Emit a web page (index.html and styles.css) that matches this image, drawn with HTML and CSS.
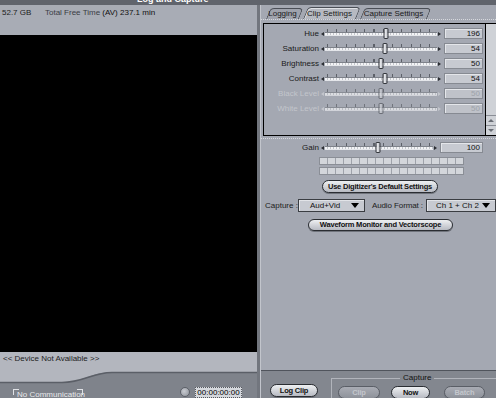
FILE: index.html
```html
<!DOCTYPE html>
<html lang="en">
<head>
    <meta charset="UTF-8">
    <meta name="viewport" content="width=device-width, initial-scale=1.0">
    <title>Log and Capture</title>
    <link rel="stylesheet" href="styles.css">
</head>
<body>
    <div class="window">
        <div class="titlebar"><span>Log and Capture</span></div>
        <div class="main">
            <div class="left">
                <div class="info">
                    <span class="disk">52.7 GB</span>
                    <span class="free">Total Free Time <b>(AV) 237.1 min</b></span>
                </div>
                <div class="video"></div>
                <div class="device">&lt;&lt; Device Not Available &gt;&gt;</div>
                <svg class="wave" viewBox="0 0 257 20" preserveAspectRatio="none">
                    <rect width="257" height="20" fill="#7f838b"/>
                    <path d="M0 0 H257 V6 H112 C92 6 84 16 62 16 H0 Z" fill="#b3b6be"/>
                    <path d="M0 16.5 H62 C84 16.5 92 6.5 112 6.5 H257" fill="none" stroke="#5b5f67" stroke-width="1.5"/>
                </svg>
                <div class="transport">
                    <div class="status">No Communication</div>
                    <div class="tc-icon"></div>
                    <div class="timecode">00:00:00:00</div>
                </div>
            </div>

            <div class="right">
                <div class="tabs">
                    <div class="tab tab-logging">Logging</div>
                    <div class="tab tab-clip active">Clip Settings</div>
                    <div class="tab tab-capture">Capture Settings</div>
                </div>

                <div class="image-box">
                    <div class="rows">
                        <div class="row">
                            <span class="label">Hue</span>
                            <span class="arrow l"></span>
                            <span class="track"><span class="thumb" style="left:54.4%"></span></span>
                            <span class="arrow r"></span>
                            <span class="value">196</span>
                        </div>
                        <div class="row">
                            <span class="label">Saturation</span>
                            <span class="arrow l"></span>
                            <span class="track"><span class="thumb" style="left:54%"></span></span>
                            <span class="arrow r"></span>
                            <span class="value">54</span>
                        </div>
                        <div class="row">
                            <span class="label">Brightness</span>
                            <span class="arrow l"></span>
                            <span class="track"><span class="thumb" style="left:50%"></span></span>
                            <span class="arrow r"></span>
                            <span class="value">50</span>
                        </div>
                        <div class="row">
                            <span class="label">Contrast</span>
                            <span class="arrow l"></span>
                            <span class="track"><span class="thumb" style="left:54%"></span></span>
                            <span class="arrow r"></span>
                            <span class="value">54</span>
                        </div>
                        <div class="row disabled">
                            <span class="label">Black Level</span>
                            <span class="arrow l"></span>
                            <span class="track"><span class="thumb" style="left:50%"></span></span>
                            <span class="arrow r"></span>
                            <span class="value">50</span>
                        </div>
                        <div class="row disabled">
                            <span class="label">White Level</span>
                            <span class="arrow l"></span>
                            <span class="track"><span class="thumb" style="left:50%"></span></span>
                            <span class="arrow r"></span>
                            <span class="value">50</span>
                        </div>
                    </div>
                    <div class="scrollbar">
                        <div class="sb-track"></div>
                        <div class="sb-btn up"></div>
                        <div class="sb-btn down"></div>
                    </div>
                </div>

                <div class="audio">
                    <div class="row gain">
                        <span class="label">Gain</span>
                        <span class="arrow l"></span>
                        <span class="track"><span class="thumb" style="left:49%"></span></span>
                        <span class="arrow r"></span>
                        <span class="value">100</span>
                    </div>
                    <div class="meter"></div>
                    <div class="meter"></div>
                    <button class="pill defaults">Use Digitizer's Default Settings</button>
                </div>

                <div class="capture-row">
                    <span class="cap-label">Capture :</span>
                    <div class="select sel-capture"><span>Aud+Vid</span><i class="caret"></i></div>
                    <span class="fmt-label">Audio Format :</span>
                    <div class="select sel-format"><span>Ch 1 + Ch 2</span><i class="caret"></i></div>
                </div>

                <button class="pill scopes">Waveform Monitor and Vectorscope</button>

                <div class="bottom">
                    <button class="pill log-clip">Log Clip</button>
                    <div class="group">
                        <span class="group-title">Capture</span>
                        <button class="pill off btn-clip">Clip</button>
                        <button class="pill btn-now">Now</button>
                        <button class="pill off btn-batch">Batch</button>
                    </div>
                </div>
            </div>
        </div>
    </div>
</body>
</html>
```

FILE: styles.css
```css
* {
    box-sizing: border-box;
}
body {
    margin: 0;
    font-family: "Liberation Sans", Arial, sans-serif;
    font-size: 8px;
    color: #1c1c1c;
    background: #a4a8b2;
    white-space: nowrap;
}
.window {
    width: 496px;
    height: 398px;
    overflow: hidden;
    display: flex;
    flex-direction: column;
}
.titlebar {
    height: 5px;
    overflow: hidden;
    background: #60646c;
    padding-left: 137px;
    color: #fff;
    font-weight: bold;
    font-size: 9px;
    line-height: 9px;
}
.titlebar span {
    display: block;
    margin-top: -5px;
}
.main {
    flex: 1;
    display: flex;
    min-height: 0;
}

/* left: viewer */
.left {
    width: 260px;
    display: flex;
    flex-direction: column;
    background: #a8acb5;
    border-right: 3px solid #72767e;
}
.info {
    height: 30px;
    display: flex;
    padding: 3px 2px 0;
    line-height: 9px;
}
.disk {
    width: 43px;
}
.free {
    color: #3a3d44;
}
.free b {
    font-weight: normal;
    color: #111;
}
.video {
    flex: 1;
    background: #000;
}
.device {
    height: 14px;
    line-height: 14px;
    padding-left: 3px;
    background: #b3b6be;
    color: #222;
}
.wave {
    display: block;
    width: 257px;
    height: 20px;
}
.transport {
    height: 12px;
    background: #7f838b;
    display: flex;
}
.status {
    position: relative;
    margin: 3px 0 0 13px;
    width: 70px;
    padding-left: 4px;
    line-height: 12px;
    color: #e8e9ec;
}
.status::before,
.status::after {
    content: "";
    position: absolute;
    top: 0;
    width: 5px;
    height: 5px;
    border-top: 1px solid #e0e2e6;
}
.status::before {
    left: 0;
    border-left: 1px solid #e0e2e6;
}
.status::after {
    right: 0;
    border-right: 1px solid #e0e2e6;
}
.tc-icon {
    margin: 1px 0 0 97px;
    width: 10px;
    height: 10px;
    border-radius: 50%;
    background: radial-gradient(circle at 40% 40%, #c8cbd1, #8c9098);
    border: 1px solid #5c6068;
}
.timecode {
    margin: 1px 0 0 5px;
    width: 47px;
    height: 11px;
    line-height: 10px;
    text-align: center;
    background: #d4d7dc;
    border: 1px dotted #55585e;
    color: #000;
}

/* right: settings */
.right {
    flex: 1;
    min-width: 0;
    display: flex;
    flex-direction: column;
    border-left: 1px solid #c2c5cc;
}
.tabs {
    height: 15px;
    padding: 3px 0 0 3px;
    display: flex;
    border-bottom: 1px dotted #d6d8dd;
}
.tab {
    position: relative;
    z-index: 0;
    height: 11px;
    line-height: 11px;
    text-align: center;
    color: #1a1a1a;
}
.tab::before {
    content: "";
    position: absolute;
    inset: 0;
    z-index: -1;
    background: #9fa3ad;
    border: 1px solid #4a4e56;
    border-bottom: none;
    border-radius: 4px 4px 0 0;
    transform: skewX(-22deg);
    transform-origin: bottom;
}
.tab-logging {
    width: 33px;
    margin-left: 2px;
}
.tab-clip {
    width: 53px;
    margin-left: 4px;
}
.tab-capture {
    width: 67px;
    margin-left: 4px;
}
.tab.active {
    height: 12px;
    margin-top: -1px;
    line-height: 13px;
}
.tab.active::before {
    background: #b6b9c1;
    box-shadow: inset 1px 1px 0 #dfe1e5;
}
.image-box {
    margin: 3px 0 0 2px;
    height: 113px;
    border: 1px solid #000;
    border-right: none;
    display: flex;
}
.rows {
    flex: 1;
    padding-top: 2px;
}
.row {
    height: 15px;
    display: flex;
    align-items: center;
}
.label {
    width: 55px;
    text-align: right;
    color: #1a1a1a;
}
.arrow {
    width: 0;
    height: 0;
    border-top: 2px solid transparent;
    border-bottom: 2px solid transparent;
}
.arrow.l {
    border-right: 3px solid #2a2d32;
    margin: 0 1px 0 2px;
}
.arrow.r {
    border-left: 3px solid #2a2d32;
    margin: 0 2px 0 1px;
}
.track {
    position: relative;
    width: 112px;
    height: 4px;
    border-top: 1px solid #7e828a;
    border-bottom: 1px solid #e4e6ea;
    background: repeating-linear-gradient(90deg, #f3f4f6 0 2px, #c2c5cb 2px 3px);
}
.track::before {
    content: "";
    position: absolute;
    left: 2px;
    right: 2px;
    top: -4px;
    height: 3px;
    background: repeating-linear-gradient(90deg, #5c6068 0 1px, transparent 1px 9.3px);
}
.thumb {
    position: absolute;
    top: -5px;
    width: 5px;
    height: 11px;
    transform: translateX(-50%);
    background: linear-gradient(90deg, #f2f3f5, #c4c7cd);
    border: 1px solid #34373c;
    border-radius: 1px;
}
.value {
    margin-left: 1px;
    width: 39px;
    height: 11px;
    line-height: 10px;
    padding-right: 2px;
    text-align: right;
    background: #c7cad1;
    border: 1px solid #868a92;
    box-shadow: inset 1px 1px 0 #e4e6ea;
    color: #111;
}
.row.disabled .label {
    color: #c3c6cc;
}
.row.disabled .value {
    color: #9ea2aa;
    background: #bfc2c9;
}
.row.disabled .arrow.l {
    border-right-color: #c3c6cc;
}
.row.disabled .arrow.r {
    border-left-color: #c3c6cc;
}
.row.disabled .track,
.row.disabled .thumb {
    opacity: 0.7;
}
.scrollbar {
    width: 11px;
    border-left: 1px solid #000;
    background: #cfd2d7;
    display: flex;
    flex-direction: column;
}
.sb-track {
    flex: 1;
}
.sb-btn {
    height: 10px;
    border-top: 1px solid #8a8e96;
    display: flex;
    align-items: center;
    justify-content: center;
}
.sb-btn::before {
    content: "";
    border-left: 3px solid transparent;
    border-right: 3px solid transparent;
}
.sb-btn.up::before {
    border-bottom: 3px solid #6a6e76;
}
.sb-btn.down::before {
    border-top: 3px solid #6a6e76;
}

.audio {
    margin-top: 2px;
    border-top: 1px dotted #d6d8dd;
    padding: 1px 0 0 3px;
    display: flex;
    flex-direction: column;
    align-items: flex-start;
}
.gain .track {
    width: 108px;
}
.gain .arrow.r {
    margin-right: 3px;
}
.gain .value {
    width: 43px;
    margin-left: 0;
}
.meter {
    margin: 2px 0 0 55px;
    width: 145px;
    height: 8px;
    border: 1px solid #8a8e96;
    background: repeating-linear-gradient(90deg, #d3d6db 0 7px, #9ea2aa 7px 8px);
}
.pill {
    height: 13px;
    padding: 0;
    font-family: "Liberation Sans", Arial, sans-serif;
    font-size: 7.5px;
    font-weight: bold;
    letter-spacing: -0.2px;
    line-height: 11px;
    white-space: nowrap;
    color: #111;
    border: 1px solid #2a2d32;
    border-radius: 7px;
    background: linear-gradient(#eef0f2, #b7bac2);
    box-shadow: 0 1px 0 #70747c;
}
.defaults {
    margin: 5px 0 0 58px;
    width: 116px;
}
.capture-row {
    margin-top: 6px;
    height: 13px;
    padding-left: 4px;
    display: flex;
    align-items: center;
}
.cap-label {
    width: 34px;
}
.fmt-label {
    margin: 0 3px 0 7px;
    letter-spacing: -0.1px;
}
.select {
    flex-shrink: 0;
    height: 13px;
    display: flex;
    align-items: center;
    background: #c7cad1;
    border: 1px solid #3a3d42;
    box-shadow: inset 1px 1px 0 #e2e4e8;
    color: #111;
}
.sel-capture {
    width: 67px;
    padding-left: 11px;
}
.sel-format {
    width: 70px;
    padding-left: 9px;
}
.caret {
    margin: 0 5px 0 auto;
    border-left: 4px solid transparent;
    border-right: 4px solid transparent;
    border-top: 5px solid #000;
}
.scopes {
    margin: 7px 0 0 47px;
    width: 145px;
    height: 12px;
    line-height: 10px;
}
.bottom {
    margin-top: auto;
    height: 28px;
    border-top: 1px solid #50545c;
    background: #83878f;
    display: flex;
}
.log-clip {
    margin: 13px 0 0 9px;
    width: 48px;
}
.group {
    position: relative;
    flex: 1;
    margin: 7px -10px 0 13px;
    padding: 7px 0 0 6px;
    border: 1px solid #b1b4bb;
    border-bottom: none;
    display: flex;
    align-items: flex-start;
}
.group-title {
    position: absolute;
    top: -6px;
    left: 68px;
    padding: 0 3px;
    line-height: 10px;
    background: #83878f;
    color: #111;
}
.btn-clip {
    width: 42px;
}
.btn-now {
    margin-left: 11px;
    width: 39px;
}
.btn-batch {
    margin-left: 14px;
    width: 41px;
}
.pill.off {
    color: #c4c7cd;
    background: linear-gradient(#a9acb4, #8e929a);
    border-color: #5a5e66;
}
```
